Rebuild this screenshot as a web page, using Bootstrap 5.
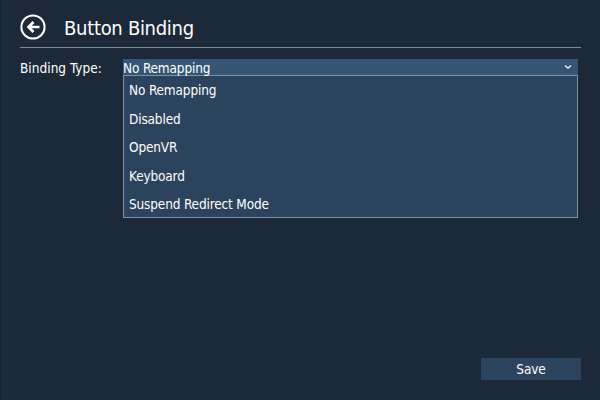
<!DOCTYPE html>
<html lang="en">
<head>
<meta charset="utf-8">
<meta name="viewport" content="width=device-width, initial-scale=1">
<title>Button Binding</title>
<link href="https://cdn.jsdelivr.net/npm/bootstrap@5.3.0/dist/css/bootstrap.min.css" rel="stylesheet">
<style>
body{background:#1c2938;color:#fff;font-family:"DejaVu Sans Condensed","DejaVu Sans",sans-serif;font-stretch:condensed;font-size:13.5px;line-height:19px;letter-spacing:-.16px;width:600px;height:400px}
.panel{height:400px;padding:11px 19px 20px 19px;border-left:1px solid #17202b}
.title-bar{height:37px;border-bottom:1px solid #7c8c93;padding-bottom:4px}
.back{width:26px;height:26px;line-height:0}
.page-title{font-size:20px;line-height:26px;font-weight:400;margin-left:18px;padding-top:2px;letter-spacing:-.3px}
.field-row{margin-top:11px}
.field-label{width:103px;line-height:18px;letter-spacing:.03px}
.combo{width:455px}
.combo .field{height:16px;line-height:18px;background:#365473;border:0;border-radius:0;color:#fff;padding:0 6px 0 0;font-size:13.5px;letter-spacing:-.16px}
.combo .field span{padding-top:1px}
.combo .options{height:143px;background:#2c435d;border:1px solid #7c93a6;border-radius:0;padding:0}
.combo .option{height:28.5px;line-height:28px;padding:0 5px;color:#fff}
.save{width:100px;height:22px;line-height:22px;background:#2c435d;color:#fff;border:0;border-radius:0;padding:0;font-size:13.5px;letter-spacing:-.1px}
</style>
<script src="https://cdn.jsdelivr.net/npm/bootstrap@5.3.0/dist/js/bootstrap.bundle.min.js"></script>
</head>
<body class="overflow-hidden">
<main class="panel d-flex flex-column">
  <header class="title-bar d-flex align-items-center">
    <button class="back btn border-0 p-0" aria-label="Back">
      <svg width="26" height="26" viewBox="0 0 26 26" fill="none" stroke="#fff"><circle cx="13" cy="13" r="11.6" stroke-width="2"/><path d="M19.5 13H8.5M13.5 8L8.5 13l5 5" stroke-width="2.6"/></svg>
    </button>
    <h1 class="page-title mb-0">Button Binding</h1>
  </header>
  <div class="field-row d-flex align-items-start">
    <label class="field-label">Binding Type:</label>
    <div class="combo">
      <button class="field btn w-100 d-flex justify-content-between align-items-center"><span>No Remapping</span>
        <svg width="8" height="6" viewBox="0 0 8 6" fill="none" stroke="#fff" stroke-width="1.2"><path d="M1 1.5L4 4.3L7 1.5"/></svg>
      </button>
      <ul class="options list-unstyled mb-0">
        <li class="option">No Remapping</li>
        <li class="option">Disabled</li>
        <li class="option">OpenVR</li>
        <li class="option">Keyboard</li>
        <li class="option">Suspend Redirect Mode</li>
      </ul>
    </div>
  </div>
  <footer class="mt-auto d-flex justify-content-end"><button class="save btn">Save</button></footer>
</main>
</body>
</html>
